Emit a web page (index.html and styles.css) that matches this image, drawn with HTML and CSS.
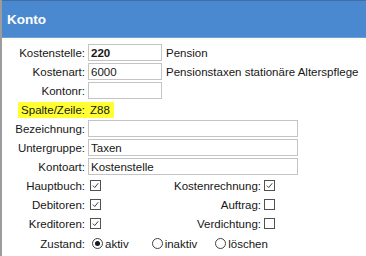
FILE: index.html
```html
<!DOCTYPE html>
<html lang="de">
<head>
<meta charset="utf-8">
<title>Konto</title>
<link rel="stylesheet" href="styles.css">
</head>
<body>
<div class="panel">
  <div class="header">Konto</div>
  <div class="rule"></div>
  <div class="form">
    <div class="row">
      <span class="lbl">Kostenstelle:</span>
      <span class="field short bold">220</span>
      <span class="desc">Pension</span>
    </div>
    <div class="row">
      <span class="lbl">Kostenart:</span>
      <span class="field short">6000</span>
      <span class="desc">Pensionstaxen stationäre Alterspflege</span>
    </div>
    <div class="row">
      <span class="lbl">Kontonr:</span>
      <span class="field short"></span>
    </div>
    <div class="row">
      <span class="lbl"><span class="hl hl-l">Spalte/Zeile:</span></span>
      <span class="hl hl-r">Z88</span>
    </div>
    <div class="row">
      <span class="lbl">Bezeichnung:</span>
      <span class="field long"></span>
    </div>
    <div class="row">
      <span class="lbl">Untergruppe:</span>
      <span class="field long">Taxen</span>
    </div>
    <div class="row">
      <span class="lbl">Kontoart:</span>
      <span class="field long">Kostenstelle</span>
    </div>
    <div class="row">
      <span class="lbl">Hauptbuch:</span>
      <span class="chk checked"><svg viewBox="0 0 11 11"><path d="M2.2 5.6 L4.6 8 L8.8 2.8" /></svg></span>
      <span class="lbl2">Kostenrechnung:</span>
      <span class="chk chk2 checked"><svg viewBox="0 0 11 11"><path d="M2.2 5.6 L4.6 8 L8.8 2.8" /></svg></span>
    </div>
    <div class="row">
      <span class="lbl">Debitoren:</span>
      <span class="chk checked"><svg viewBox="0 0 11 11"><path d="M2.2 5.6 L4.6 8 L8.8 2.8" /></svg></span>
      <span class="lbl2">Auftrag:</span>
      <span class="chk chk2"></span>
    </div>
    <div class="row">
      <span class="lbl">Kreditoren:</span>
      <span class="chk checked"><svg viewBox="0 0 11 11"><path d="M2.2 5.6 L4.6 8 L8.8 2.8" /></svg></span>
      <span class="lbl2">Verdichtung:</span>
      <span class="chk chk2"></span>
    </div>
    <div class="row row-radio">
      <span class="lbl">Zustand:</span>
      <span class="radio on r1"></span><span class="rtext">aktiv</span>
      <span class="radio r2"></span><span class="rtext">inaktiv</span>
      <span class="radio r3"></span><span class="rtext">löschen</span>
    </div>
  </div>
</div>
</body>
</html>
```
FILE: styles.css
```css
html, body {
  margin: 0;
  padding: 0;
  background: #ffffff;
}
body {
  font-family: "Liberation Sans", Arial, sans-serif;
  font-size: 11.5px;
  color: #161616;
  width: 366px;
  height: 256px;
  overflow: hidden;
}
.panel {
  border-left: 2px solid #9c9c9c;
  height: 256px;
  box-sizing: border-box;
}
.header {
  height: 38px;
  box-sizing: border-box;
  background: #4a89cf;
  border-top: 1px solid #3f6fa6;
  border-bottom: 1px solid #6f9fd6;
  color: #ffffff;
  font-weight: bold;
  font-size: 13.5px;
  padding-left: 5px;
  display: flex;
  align-items: center;
}
.rule {
  height: 2px;
  background: #fbfbee;
}
.form {
  padding-top: 3px;
}
.row {
  display: flex;
  align-items: center;
  height: 19px;
}
.lbl {
  width: 83px;
  flex: none;
  text-align: right;
}
.field {
  margin-left: 3px;
  height: 17px;
  box-sizing: border-box;
  border: 1px solid #c4c4c4;
  padding-left: 2px;
  display: flex;
  align-items: center;
  flex: none;
}
.short { width: 74px; }
.long { width: 210px; }
.bold { font-weight: bold; }
.desc { margin-left: 4px; }
.hl {
  background: #ffff33;
  display: inline-block;
  line-height: 16px;
}
.hl-l { padding-left: 3px; }
.hl-r { padding: 0 4px 0 5px; }
.chk {
  width: 11px;
  height: 11px;
  box-sizing: border-box;
  border: 1px solid #505050;
  margin-left: 5px;
  flex: none;
  display: flex;
}
.chk svg {
  width: 9px;
  height: 9px;
}
.chk path {
  fill: none;
  stroke: #3a3a3a;
  stroke-width: 1.2;
}
.lbl2 {
  width: 160px;
  flex: none;
  text-align: right;
}
.chk2 { margin-left: 3px; }
.radio {
  width: 11px;
  height: 11px;
  box-sizing: border-box;
  border: 1px solid #404040;
  border-radius: 50%;
  flex: none;
  position: relative;
}
.radio.on::after {
  content: "";
  position: absolute;
  left: 2px;
  top: 2px;
  width: 5px;
  height: 5px;
  border-radius: 50%;
  background: #1a1a1a;
}
.r1 { margin-left: 7px; }
.r2 { margin-left: 23px; }
.r3 { margin-left: 18px; }
.rtext { margin-left: 2px; }
.row-radio { height: 21px; }
```
